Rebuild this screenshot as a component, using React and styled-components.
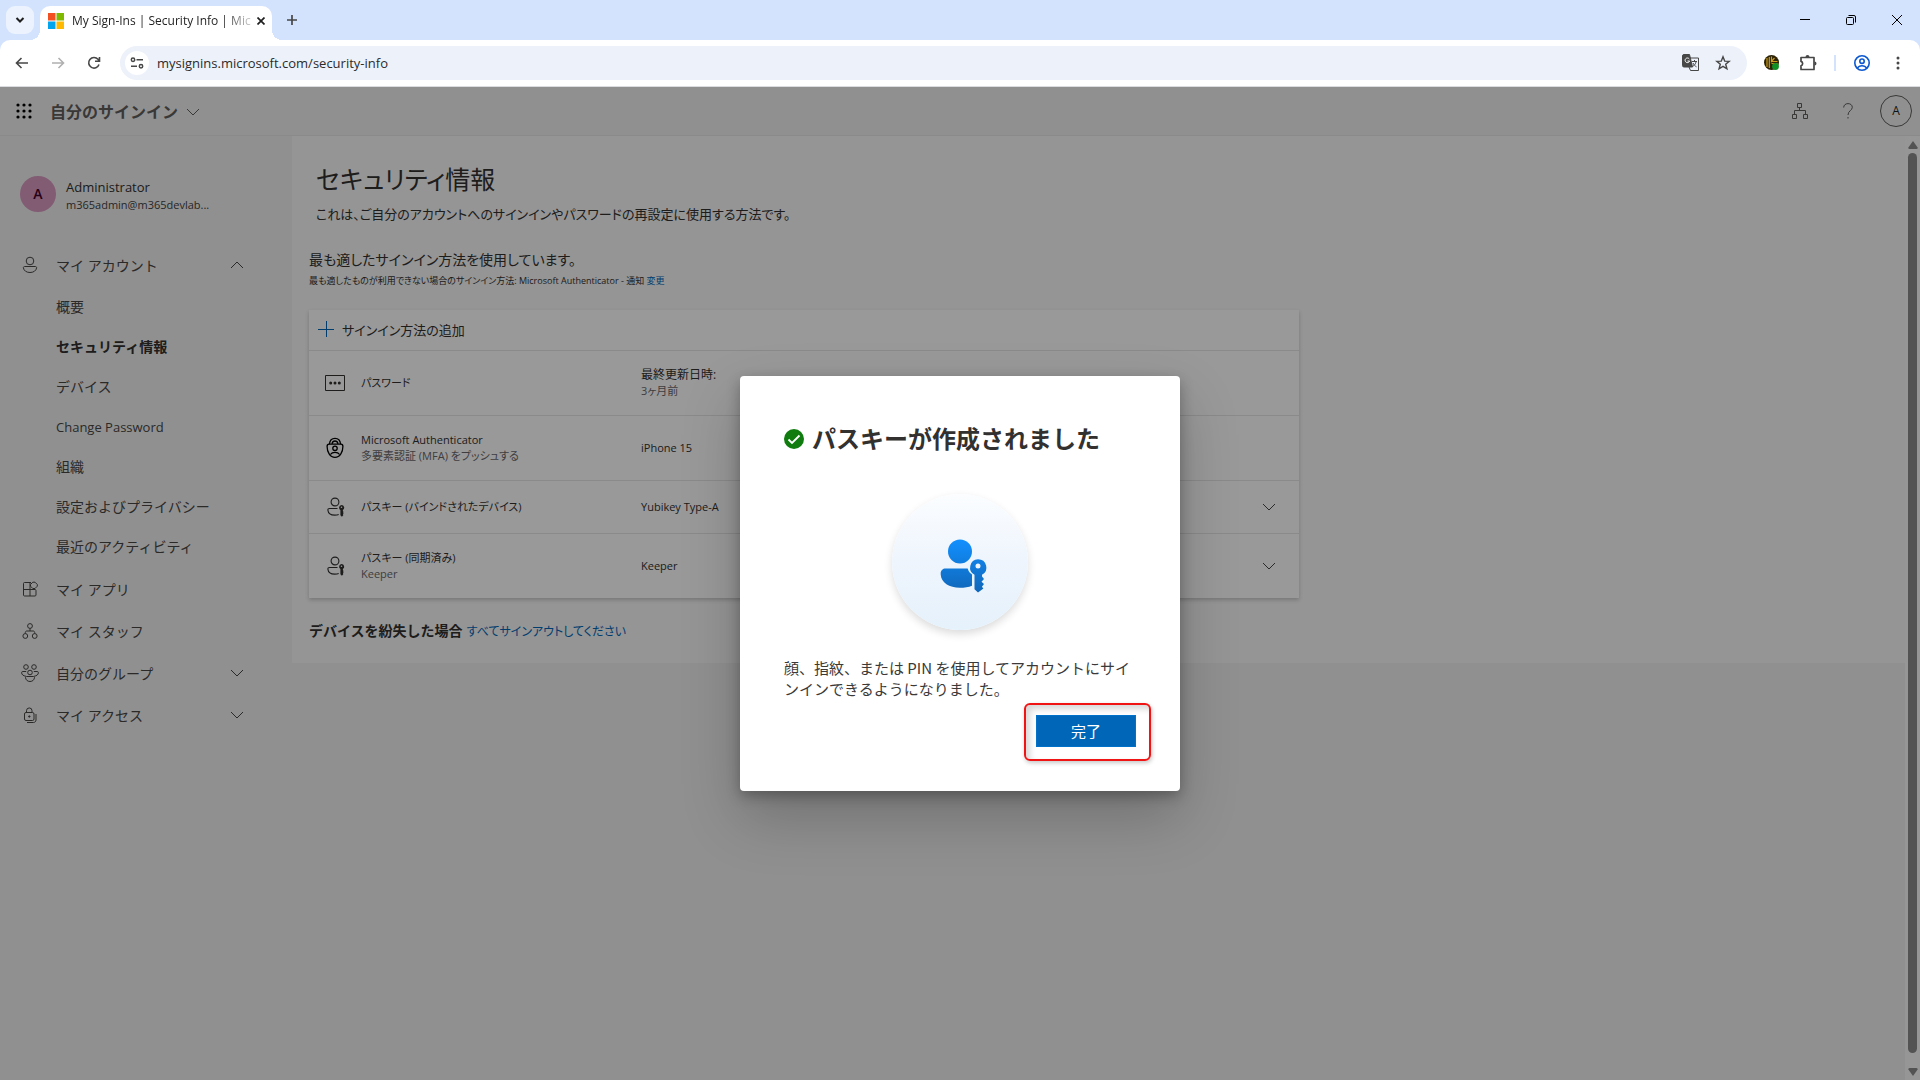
import React from "react";
import styled, { createGlobalStyle } from "styled-components";

const ui = `"Open Sans", "Noto Sans CJK JP", sans-serif`;

const GlobalStyle = createGlobalStyle`
  *, *::before, *::after { box-sizing: border-box; }
  html, body, #root { height: 100%; }
  body { margin: 0; overflow: hidden; font-family: ${ui}; color: #323130; }
  button, input { font-family: inherit; }
  svg { display: block; flex: none; }
  ul { list-style: none; margin: 0; padding: 0; }
`;

const IconButton = styled.button`
  display: flex;
  align-items: center;
  justify-content: center;
  flex: none;
  width: ${(p) => p.$w || 36}px;
  height: ${(p) => p.$h || 28}px;
  padding: 0;
  border: 0;
  border-radius: ${(p) => p.$radius || 0}px;
  background: ${(p) => p.$bg || "transparent"};
  color: ${(p) => p.$color || "#474747"};
`;

/* ---------- browser chrome ---------- */

const Window = styled.div`
  display: flex;
  flex-direction: column;
  height: 100vh;
  background: #fff;
`;

const TabStrip = styled.div`
  display: flex;
  align-items: flex-end;
  height: 40px;
  background: #d3e3fd;
  padding-left: 6px;
`;

const TabSearchSlot = styled.div`
  display: flex;
  align-items: center;
  height: 40px;
  width: 34px;
`;

const Tab = styled.div`
  position: relative;
  display: flex;
  align-items: center;
  width: 232px;
  height: 34px;
  padding: 0 6px 4px 8px;
  background: #fff;
  border-radius: 10px 10px 0 0;

  &::before, &::after {
    content: "";
    position: absolute;
    bottom: 0;
    width: 10px;
    height: 10px;
  }
  &::before { left: -10px; background: radial-gradient(circle at 0 0, transparent 10px, #fff 10px); }
  &::after { right: -10px; background: radial-gradient(circle at 100% 0, transparent 10px, #fff 10px); }
`;

const TabTitle = styled.span`
  flex: 1;
  margin-left: 8px;
  white-space: nowrap;
  font-size: 12px;
  line-height: 18px;
  color: #1f1f1f;
  mask-image: linear-gradient(90deg, #000 84%, transparent 104%);
`;

const WindowControls = styled.div`
  display: flex;
  align-self: flex-start;
  margin-left: auto;
`;

const Toolbar = styled.div`
  display: flex;
  align-items: center;
  height: 47px;
  padding: 0 4px;
  background: #fff;
  border-bottom: 1px solid #dadce0;
  border-radius: 10px 10px 0 0;
`;

const ToolbarBack = styled.div`
  background: #d3e3fd;
`;

const AddressBar = styled.div`
  display: flex;
  align-items: center;
  flex: 1;
  height: 34px;
  margin: 0 7px 0 8px;
  padding: 0 8px 0 5px;
  border-radius: 17px;
  background: #ecf1fa;
`;

const Url = styled.input`
  flex: 1;
  min-width: 0;
  margin-left: 8px;
  padding: 0;
  border: 0;
  outline: 0;
  background: transparent;
  font-size: 13px;
  line-height: 20px;
  color: #2b2b2b;
`;

const ToolbarDivider = styled.span`
  width: 2px;
  height: 16px;
  margin: 0 8px;
  background: #d3e3fd;
`;

/* ---------- page ---------- */

const Page = styled.div`
  position: relative;
  display: flex;
  flex-direction: column;
  flex: 1;
  min-height: 0;
  background: #f0f0f0;
`;

const Header = styled.header`
  display: flex;
  align-items: center;
  height: 49px;
  padding: 0 8px 0 6px;
  border-bottom: 1px solid #e6e6e6;
`;

const AppName = styled.button`
  display: flex;
  align-items: center;
  gap: 8px;
  margin-left: 8px;
  padding: 2px 0 0;
  border: 0;
  background: transparent;
  font-size: 16px;
  line-height: 24px;
  font-weight: 700;
  color: #605e5c;
`;

const HeaderActions = styled.div`
  display: flex;
  align-items: center;
  margin-left: auto;
`;

const Account = styled.button`
  width: 32px;
  height: 32px;
  margin-left: 8px;
  padding: 0;
  border: 1px solid #605e5c;
  border-radius: 50%;
  background: transparent;
  font-size: 12px;
  line-height: 30px;
  color: #201f1e;
`;

const Body = styled.div`
  display: flex;
  flex: 1;
  min-height: 0;
  align-items: flex-start;
`;

const Sidebar = styled.aside`
  flex: none;
  width: 292px;
  padding-top: 40px;
`;

const Profile = styled.div`
  display: flex;
  align-items: center;
  gap: 10px;
  height: 36px;
  margin-bottom: 32px;
  padding-left: 20px;
`;

const Avatar = styled.span`
  width: 36px;
  height: 36px;
  border-radius: 50%;
  background: #d799c0;
  color: #43002a;
  font-size: 14px;
  line-height: 36px;
  font-weight: 600;
  text-align: center;
`;

const ProfileLines = styled.div`
  padding-top: 3px;
`;

const ProfileText = styled.div`
  font-size: ${(p) => (p.$small ? 11 : 13)}px;
  line-height: 17px;
  color: ${(p) => (p.$small ? "#424242" : "#323130")};
`;

const NavButton = styled.button`
  display: flex;
  align-items: center;
  width: 100%;
  height: 42px;
  padding: 0 48px 0 18px;
  border: 0;
  background: transparent;
  font-size: 14px;
  color: #484644;
  text-decoration: none;
  text-align: left;
`;

const NavIcon = styled.span`
  display: flex;
  justify-content: center;
  width: 24px;
  margin-right: 14px;
`;

const NavLabel = styled.span`
  flex: 1;
`;

const SubNav = styled.ul`
  padding: 1px 0;
`;

const SubLink = styled.a`
  display: block;
  padding-left: 56px;
  height: 40px;
  font-size: ${(p) => (p.$latin ? 13 : 14)}px;
  line-height: 40px;
  font-weight: ${(p) => (p.$active ? 700 : 400)};
  color: ${(p) => (p.$active ? "#323130" : "#484644")};
  text-decoration: none;
`;

const Main = styled.main`
  flex: 1;
  padding: 25px 17px 19px;
  background: #f8f8f8;
  font-feature-settings: "palt";
`;

const Title = styled.h1`
  margin: 0 0 0 7px;
  font-size: 25px;
  line-height: 36px;
  font-weight: 400;
`;

const Lead = styled.p`
  margin: 7px 7px 24px;
  font-size: 13px;
  line-height: 20px;
`;

const Recommend = styled.p`
  margin: 0;
  font-size: 14px;
  line-height: 24px;
`;

const Fallback = styled.p`
  margin: 0 0 20px;
  font-size: 9px;
  line-height: 18px;
`;

const Link = styled.a`
  color: #0067b8;
  text-decoration: none;
`;

const Card = styled.section`
  max-width: 990px;
  background: #fff;
  box-shadow: 0 2px 4px rgba(0, 0, 0, 0.2);
`;

const AddMethod = styled.button`
  display: flex;
  align-items: center;
  gap: 8px;
  width: 100%;
  height: 40px;
  padding: 0 9px 2px;
  border: 0;
  background: transparent;
  font-size: 13px;
  color: #323130;
  font-feature-settings: inherit;
`;

const Method = styled.li`
  display: grid;
  grid-template-columns: 20px 296px 1fr 36px;
  align-items: center;
  height: ${(p) => (p.$compact ? 53 : 65)}px;
  padding: 0 12px 0 16px;
  border-top: 1px solid #e6e6e6;
  font-size: 11px;
  line-height: 16px;
`;

const MethodName = styled.div`
  padding-left: 16px;
`;

const MethodValue = styled.div`
  font-size: ${(p) => (p.$dated ? 12 : 11)}px;
`;

const Secondary = styled.div`
  font-size: 11px;
  color: #69676a;
`;

const Lost = styled.p`
  display: flex;
  align-items: baseline;
  gap: 4px;
  margin: 21px 0 0;
  font-size: 12px;
  line-height: 24px;
`;

const LostLabel = styled.b`
  font-size: 14px;
  font-feature-settings: normal;
`;

const ScrollBar = styled.div`
  display: flex;
  flex-direction: column;
  align-items: center;
  align-self: stretch;
  width: 15px;
  padding: 5px 0 4px;
  gap: 4px;
  background: #fafafa;
`;

const ScrollThumb = styled.div`
  flex: 1;
  width: 9px;
  margin-bottom: 11px;
  border-radius: 5px;
  background: #8b8b8b;
`;

/* ---------- dialog ---------- */

const Overlay = styled.div`
  position: absolute;
  inset: 0;
  display: flex;
  align-items: center;
  justify-content: center;
  background: rgba(0, 0, 0, 0.4);
`;

const Dialog = styled.div`
  width: 440px;
  padding: 44px;
  border-radius: 4px;
  background: #fff;
  box-shadow: 0 26px 58px rgba(0, 0, 0, 0.22), 0 5px 14px rgba(0, 0, 0, 0.28);
`;

const DialogTitle = styled.h2`
  display: flex;
  align-items: center;
  gap: 8px;
  margin: 0 0 36px;
  font-size: 24px;
  line-height: 38px;
  font-weight: 700;
  color: #323130;
`;

const Badge = styled.div`
  display: flex;
  align-items: center;
  justify-content: center;
  width: 136px;
  height: 136px;
  margin: 0 auto 27px;
  border-radius: 50%;
  background: linear-gradient(#fbfdff, #eff5fd 48%, #e5f1fb);
  box-shadow: 0 4px 8px rgba(0, 0, 0, 0.14);
`;

const Message = styled.p`
  margin: 0 0 16px;
  font-family: "Noto Sans CJK JP", sans-serif;
  font-size: 15px;
  line-height: 21px;
  color: #3b3a39;
`;

const Actions = styled.div`
  display: flex;
  justify-content: flex-end;
`;

const Highlighted = styled.div`
  position: relative;

  &::after {
    content: "";
    position: absolute;
    inset: -12px -15px -14px -12px;
    border: 2px solid #f01414;
    border-radius: 6px;
    box-shadow: 1px 2px 4px rgba(0, 0, 0, 0.22), inset 4px 4px 6px rgba(0, 0, 0, 0.16);
    pointer-events: none;
  }
`;

const Primary = styled.button`
  display: block;
  width: 100px;
  height: 32px;
  padding: 0;
  border: 1px solid #0072c9;
  background: #0067b8;
  color: #fff;
  font-size: 15px;
  line-height: 30px;
`;

/* ---------- icons ---------- */

const Svg = ({ w = 16, h = w, box, sw = 1, children, ...rest }) => (
  <svg width={w} height={h} viewBox={box || `0 0 ${w} ${h}`} fill="none" stroke="currentColor" strokeWidth={sw} aria-hidden="true" {...rest}>
    {children}
  </svg>
);

const Chevron = ({ up }) => (
  <Svg w={14} h={8}>
    <path d={up ? "M1 7l6-6 6 6" : "M1 1l6 6 6-6"} />
  </Svg>
);

const MicrosoftLogo = () => (
  <Svg w={16} stroke="none">
    <path fill="#f25022" d="M0 0h7.5v7.5H0z" />
    <path fill="#7fba00" d="M8.5 0H16v7.5H8.5z" />
    <path fill="#00a4ef" d="M0 8.5h7.5V16H0z" />
    <path fill="#ffb900" d="M8.5 8.5H16V16H8.5z" />
  </Svg>
);

const Waffle = () => (
  <Svg w={16} stroke="none" fill="currentColor">
    {[2, 8, 14].map((y) => [2, 8, 14].map((x) => <circle key={`${x}-${y}`} cx={x} cy={y} r="1.6" />))}
  </Svg>
);

const PersonIcon = () => (
  <Svg w={16} h={18}>
    <circle cx="8" cy="5" r="3.800" />
    <path d="M2.600 10.500h10.800c.8 0 1.300.6 1.200 1.300-.4 3-3.200 4.700-6.600 4.700s-6.200-1.700-6.600-4.700c-.1-.7.4-1.300 1.200-1.300z" />
  </Svg>
);

const AppsIcon = () => (
  <Svg w={16}>
    <path d="M8 15V8M9 1.500H2.500c-.6 0-1 .4-1 1V14c0 .6.4 1 1 1H13c.6 0 1-.4 1-1V9.500c0-.6-.4-1-1-1H1.500M8 1.500V8" />
    <path fill="#f0f0f0" d="M10.800 1.200h2.200L15.300 3.500v1.700L13 7.500h-2.200L8.500 5.200V3.500z" strokeLinejoin="round" />
  </Svg>
);

const StaffIcon = () => (
  <Svg w={16}>
    <circle cx="8" cy="3" r="2.400" />
    <circle cx="3.300" cy="13" r="2.400" />
    <circle cx="12.700" cy="13" r="2.400" />
    <path d="M8 5.400V8M3.300 10.600V9.500C3.300 8.600 4 8 5 8h6c1 0 1.700.6 1.700 1.500v1.100" />
  </Svg>
);

const GroupIcon = () => (
  <Svg w={18}>
    <circle cx="5" cy="3" r="2.300" />
    <circle cx="13" cy="3" r="2.300" />
    <circle cx="9" cy="8.500" r="2.300" />
    <path d="M4.800 12.200C2.400 12 .6 10.500.6 8.700c0-.8.5-1.200 1.200-1.200h3.400M13.200 12.200c2.400-.2 4.200-1.700 4.200-3.500 0-.8-.5-1.200-1.200-1.200h-3.400M5.500 12.500h7c.7 0 1.100.4 1 1-.2 2.400-2 4-4.500 4s-4.300-1.600-4.500-4c-.1-.600.3-1 1-1z" />
  </Svg>
);

const LockIcon = () => (
  <Svg w={14} h={16}>
    <rect x="1.500" y="5.500" width="9.500" height="8" rx="1.500" />
    <path d="M3.500 5.500V3.700a2.700 2.700 0 0 1 5.500 0v1.800M4 15.500h6.500c1.400 0 2.500-1.100 2.500-2.500V7" />
    <circle cx="6.300" cy="9.500" r=".7" fill="currentColor" />
  </Svg>
);

const PasswordIcon = () => (
  <Svg w={20} h={16}>
    <path d="M.5.5h19v15H.5z" />
    <g fill="currentColor" stroke="none">
      <circle cx="5.700" cy="8" r="1.500" />
      <circle cx="10" cy="8" r="1.500" />
      <circle cx="14.300" cy="8" r="1.500" />
    </g>
  </Svg>
);

const AuthenticatorIcon = () => (
  <Svg w={20} h={22} sw={1.3} color="#000">
    <path d="M4 7.200h12c1.300 0 1.900.8 1.900 2.200 0 5.300-2.800 11-7.900 11S2.100 14.700 2.100 9.400C2.100 8 2.700 7.200 4 7.200z" />
    <path d="M4.400 7.200C4.800 3.500 7 1.400 10 1.400s5.200 2.100 5.600 5.800M7 6.800c.4-1.800 1.500-2.800 3-2.800s2.600 1 3 2.800" />
    <circle cx="10" cy="11.300" r="2.200" />
    <path d="M5.400 17.500c1-1.500 2.600-2.200 4.600-2.200s3.600.7 4.600 2.200" />
  </Svg>
);

const PasskeyIcon = () => (
  <Svg w={20} h={20} sw={1.1}>
    <circle cx="10" cy="5" r="3.900" />
    <path d="M12.500 11.500H4.500c-1 0-1.700.6-1.600 1.600.3 3.400 3 5 6.900 5 1.500 0 2.800-.2 3.900-.7" />
    <path stroke="none" fillRule="evenodd" fill="currentColor" d="M16.500 8a2.700 2.700 0 0 1 1.400 5v1.200l.8.8-.8.9.8.8-.8.9.4.600-1.400 1.500-1.500-1.500V13a2.700 2.700 0 0 1 1.100-5zm0 1.400a.8.8 0 1 0 0 1.600.8.800 0 0 0 0-1.600z" />
  </Svg>
);

const PasskeyHero = () => (
  <svg width="55" height="61" viewBox="-7 -7 55 61" aria-hidden="true">
    <defs>
      <linearGradient id="hero" x1="0" y1="0" x2="0" y2="54" gradientUnits="userSpaceOnUse">
        <stop offset="0" stopColor="#1290ff" />
        <stop offset="1" stopColor="#1066b8" />
      </linearGradient>
    </defs>
    <g fill="url(#hero)">
      <circle cx="20" cy="12.500" r="12" />
      <path d="M5.500 29.500h22.200c.6 2.500 2.100 4.700 4.300 6v11.200c-3.400 1.500-7.600 2.100-12 2.100C9.200 48.800 1.200 44 .7 35.600V34.300c0-2.700 2.100-4.800 4.800-4.800z" />
      <path fillRule="evenodd" d="M38 20.200a8.300 8.300 0 0 1 4 15.600v1.700l2 2.400-2.500 2.800 2.500 2.400-2.100 2.600 1.500 1.900L38 53.400l-3.500-3.200V35.800A8.300 8.300 0 0 1 38 20.200zm0 4.300a2.500 2.500 0 1 0 0 5 2.500 2.500 0 0 0 0-5z" />
    </g>
  </svg>
);

const NAV_CHILDREN = ["概要", "セキュリティ情報", "デバイス", "Change Password", "組織", "設定およびプライバシー", "最近のアクティビティ"];

const NAV_ITEMS = [
  { label: "マイ アプリ", Icon: AppsIcon },
  { label: "マイ スタッフ", Icon: StaffIcon },
  { label: "自分のグループ", Icon: GroupIcon, expandable: true },
  { label: "マイ アクセス", Icon: LockIcon, expandable: true },
];

const METHODS = [
  { name: "パスワード", value: "最終更新日時:", valueDetail: "3ヶ月前", Icon: PasswordIcon },
  { name: "Microsoft Authenticator", detail: "多要素認証 (MFA) をプッシュする", value: "iPhone 15", Icon: AuthenticatorIcon },
  { name: "パスキー (バインドされたデバイス)", value: "Yubikey Type-A", Icon: PasskeyIcon, compact: true, expandable: true },
  { name: "パスキー (同期済み)", detail: "Keeper", value: "Keeper", Icon: PasskeyIcon, expandable: true },
];

const BrowserTabs = () => (
  <TabStrip>
    <TabSearchSlot>
      <IconButton $w={28} $radius={9} $bg="#ecf3fe" $color="#1f1f1f" aria-label="Search tabs">
        <Svg w={10} h={6} sw={2}><path d="M1.500 1l3.500 3.500L8.500 1" /></Svg>
      </IconButton>
    </TabSearchSlot>
    <Tab>
      <MicrosoftLogo />
      <TabTitle>My Sign-Ins | Security Info | Mic</TabTitle>
      <IconButton $w={20} $h={20} $color="#1f1f1f" aria-label="Close tab">
        <Svg w={8} sw={1.7}><path d="M.5.5l7 7M7.500.5l-7 7" /></Svg>
      </IconButton>
    </Tab>
    <IconButton $w={40} $h={40} aria-label="New tab">
      <Svg w={10} sw={1.7}><path d="M5 0v10M0 5h10" /></Svg>
    </IconButton>
    <WindowControls>
      <IconButton $w={46} $h={40} $color="#000" aria-label="Minimize">
        <Svg w={10}><path d="M0 4.500h10" /></Svg>
      </IconButton>
      <IconButton $w={46} $h={40} $color="#000" aria-label="Restore">
        <Svg w={10}><rect x=".5" y="2.500" width="7" height="7" rx="1" /><path d="M2.500.5h5.500a1.500 1.500 0 0 1 1.500 1.500v5.500" /></Svg>
      </IconButton>
      <IconButton $w={46} $h={40} $color="#000" aria-label="Close">
        <Svg w={10}><path d="M0 0l10 10M10 0L0 10" /></Svg>
      </IconButton>
    </WindowControls>
  </TabStrip>
);

const BrowserToolbar = () => (
  <ToolbarBack>
    <Toolbar>
      <IconButton aria-label="Back">
        <Svg w={14} h={12} sw={1.6}><path d="M13 6H2M6.500 1L1.500 6l5 5" /></Svg>
      </IconButton>
      <IconButton $color="#b0b0b0" aria-label="Forward">
        <Svg w={14} h={12} sw={1.6}><path d="M1 6h11M7.500 1l5 5-5 5" /></Svg>
      </IconButton>
      <IconButton aria-label="Reload">
        <Svg w={14} sw={1.6}><path d="M12 8.500A5.300 5.300 0 1 1 11 3.300L12.300 5M12.500 1v4.300H8" /></Svg>
      </IconButton>
      <AddressBar>
        <IconButton $w={24} $h={24} $radius={12} $bg="#fff" aria-label="Site information">
          <Svg w={14} h={12} sw={1.5}>
            <circle cx="3" cy="2.700" r="1.700" /><path d="M6.500 2.700H13M1 9.300h6" /><circle cx="11" cy="9.300" r="1.700" />
          </Svg>
        </IconButton>
        <Url type="text" aria-label="Address" defaultValue="mysignins.microsoft.com/security-info" />
        <IconButton $w={32} aria-label="Translate">
          <Svg w={18}>
            <path d="M7 4h9.500v12.500H8.500L7 13" />
            <path fill="currentColor" d="M2 .5h5.500l3 12.500H2A1.500 1.500 0 0 1 .5 11.500V2A1.500 1.500 0 0 1 2 .5z" />
            <path stroke="#fff" d="M7.300 5A2.300 2.300 0 1 0 7.600 7H5.500" />
            <path d="M10 7.500h5M12.500 6v1.500M14.200 7.500c-.6 2.500-2 4-3.500 5M11 9c.8 1.800 2 3 3.500 3.800" />
          </Svg>
        </IconButton>
        <IconButton $w={32} aria-label="Bookmark">
          <Svg w={16} sw={1.4}><path d="M8 1.800l1.700 4.300 4.500.3-3.500 2.900 1.200 4.500L8 11.300l-3.900 2.500 1.200-4.500L1.800 6.400l4.500-.3z" /></Svg>
        </IconButton>
      </AddressBar>
      <IconButton aria-label="Extension">
        <Svg w={16} stroke="none">
          <circle cx="7.500" cy="7.500" r="7.500" fill="#2b2207" />
          <path stroke="#c99a1c" strokeWidth="1.200" d="M3 3v9M5.300 2v11M7.500 1.500v5l3-3.500M7.500 8.500h6M7.500 6.500h6" />
          <circle cx="11.500" cy="11.500" r="3.400" fill="#0f9024" />
        </Svg>
      </IconButton>
      <IconButton aria-label="Extensions">
        <Svg w={18} sw={1.7}>
          <path strokeLinejoin="round" d="M2 3.500h13v12H2v-3.700a2.300 2.300 0 0 0 0-4.400z" />
          <path fill="currentColor" stroke="none" d="M6.500 3a2 2 0 0 1 4 0zM15.500 7.500a2 2 0 0 1 0 4z" />
        </Svg>
      </IconButton>
      <ToolbarDivider />
      <IconButton $color="#0b57d0" aria-label="Profile">
        <Svg w={16} sw={1.6}>
          <circle cx="8" cy="8" r="7.200" /><circle cx="8" cy="6.200" r="2.200" /><path d="M3.300 13.200c1-1.700 2.700-2.500 4.700-2.500s3.700.8 4.700 2.500" />
        </Svg>
      </IconButton>
      <IconButton aria-label="Menu">
        <Svg w={4} h={14} stroke="none" fill="currentColor"><circle cx="2" cy="2" r="1.500" /><circle cx="2" cy="7" r="1.500" /><circle cx="2" cy="12" r="1.500" /></Svg>
      </IconButton>
    </Toolbar>
  </ToolbarBack>
);

const Navigation = () => (
  <nav>
    <NavButton type="button" aria-expanded="true">
      <NavIcon><PersonIcon /></NavIcon>
      <NavLabel>マイ アカウント</NavLabel>
      <Chevron up />
    </NavButton>
    <SubNav>
      {NAV_CHILDREN.map((label, i) => (
        <li key={label}>
          <SubLink href="#" $active={i === 1} $latin={i === 3}>{label}</SubLink>
        </li>
      ))}
    </SubNav>
    {NAV_ITEMS.map(({ label, Icon, expandable }) => (
      <NavButton key={label} as={expandable ? "button" : "a"} href={expandable ? undefined : "#"}>
        <NavIcon><Icon /></NavIcon>
        <NavLabel>{label}</NavLabel>
        {expandable && <Chevron />}
      </NavButton>
    ))}
  </nav>
);

const SecurityInfo = () => (
  <Main>
    <Title>セキュリティ情報</Title>
    <Lead>これは、ご自分のアカウントへのサインインやパスワードの再設定に使用する方法です。</Lead>
    <Recommend>最も適したサインイン方法を使用しています。</Recommend>
    <Fallback>
      最も適したものが利用できない場合のサインイン方法: Microsoft Authenticator - 通知 <Link href="#">変更</Link>
    </Fallback>
    <Card>
      <AddMethod>
        <Svg w={16} color="#0067b8"><path d="M8.500 0v16M0 8.500h16" /></Svg>
        サインイン方法の追加
      </AddMethod>
      <ul>
        {METHODS.map((m) => (
          <Method key={m.name} $compact={m.compact}>
            <m.Icon />
            <MethodName>
              {m.name}
              {m.detail && <Secondary>{m.detail}</Secondary>}
            </MethodName>
            <MethodValue $dated={Boolean(m.valueDetail)}>
              {m.value}
              {m.valueDetail && <Secondary>{m.valueDetail}</Secondary>}
            </MethodValue>
            {m.expandable && <IconButton aria-label={`${m.name} の詳細`}><Chevron /></IconButton>}
          </Method>
        ))}
      </ul>
    </Card>
    <Lost>
      <LostLabel>デバイスを紛失した場合</LostLabel>
      <Link href="#">すべてサインアウトしてください</Link>
    </Lost>
  </Main>
);

const SuccessDialog = () => (
  <Overlay>
    <Dialog role="dialog" aria-modal="true" aria-labelledby="dialog-title">
      <DialogTitle id="dialog-title">
        <Svg w={20} stroke="none">
          <circle cx="10" cy="10" r="10" fill="#107c10" />
          <path d="M4.500 10.500l3.500 3.500 7.500-7.500" stroke="#fff" strokeWidth="1.800" />
        </Svg>
        パスキーが作成されました
      </DialogTitle>
      <Badge><PasskeyHero /></Badge>
      <Message>顔、指紋、または PIN を使用してアカウントにサインインできるようになりました。</Message>
      <Actions>
        <Highlighted><Primary>完了</Primary></Highlighted>
      </Actions>
    </Dialog>
  </Overlay>
);

export default function App() {
  return (
    <Window>
      <GlobalStyle />
      <BrowserTabs />
      <BrowserToolbar />
      <Page>
        <Header>
          <IconButton $color="#000" aria-label="App launcher"><Waffle /></IconButton>
          <AppName>自分のサインイン<Chevron /></AppName>
          <HeaderActions>
            <IconButton $w={48} $h={48} $color="#605e5c" aria-label="Organization">
              <Svg w={16} h={16}>
                <path d="M5.500.5h4v4h-4zM.5 11.500h4v4h-4zM11.500 11.500h4v4h-4zM7.500 4.500v3M2.500 11.500v-4h11v4" />
              </Svg>
            </IconButton>
            <IconButton $w={48} $h={48} $color="#605e5c" aria-label="Help">
              <Svg w={10} h={16}>
                <path d="M.7 4.500C.7 2.200 2.500.6 5 .6s4.300 1.500 4.300 3.700C9.300 7.500 5 7.800 5 12" /><path d="M5 14v1.500" />
              </Svg>
            </IconButton>
            <Account aria-label="Account">A</Account>
          </HeaderActions>
        </Header>
        <Body>
          <Sidebar>
            <Profile>
              <Avatar>A</Avatar>
              <ProfileLines>
                <ProfileText>Administrator</ProfileText>
                <ProfileText $small>m365admin@m365devlab...</ProfileText>
              </ProfileLines>
            </Profile>
            <Navigation />
          </Sidebar>
          <SecurityInfo />
          <ScrollBar>
            <Svg w={10} h={8} stroke="none"><path fill="#8b8b8b" d="M5 0l4.600 6.500Q10 8 8.500 8h-7Q0 8 .4 6.500z" /></Svg>
            <ScrollThumb />
            <Svg w={10} h={8} stroke="none"><path fill="#8b8b8b" d="M5 8L.4 1.500Q0 0 1.500 0h7Q10 0 9.600 1.500z" /></Svg>
          </ScrollBar>
        </Body>
        <SuccessDialog />
      </Page>
    </Window>
  );
}
